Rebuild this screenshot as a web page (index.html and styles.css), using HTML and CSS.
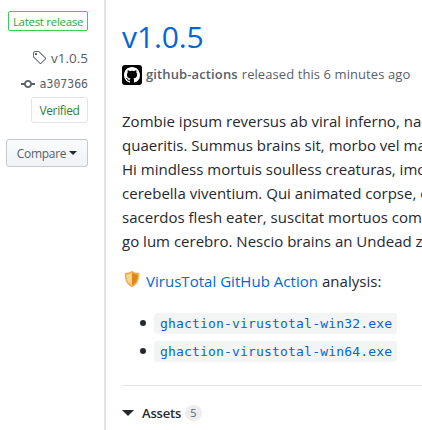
FILE: index.html
```html
<!DOCTYPE html>
<html lang="en">
<head>
<meta charset="utf-8">
<title>v1.0.5</title>
<link rel="stylesheet" href="styles.css">
</head>
<body>
<div class="release">
  <aside class="meta">
    <span class="latest">Latest release</span>
    <a class="tag"><svg width="14" height="16" viewBox="0 0 14 16"><path fill="currentColor" fill-rule="evenodd" d="M7.73 1.73C7.26 1.26 6.62 1 5.96 1H3.5C2.13 1 1 2.13 1 3.5v2.47c0 .66.27 1.3.73 1.77l6.06 6.06c.39.39 1.02.39 1.41 0l4.59-4.59a.996.996 0 0 0 0-1.41L7.73 1.73zM2.38 7.09c-.31-.3-.47-.7-.47-1.13V3.5c0-.88.72-1.59 1.59-1.59h2.47c.42 0 .83.16 1.13.47l6.14 6.13-4.73 4.73-6.13-6.15zM3.01 3h2v2H3V3h.01z"/></svg><span>v1.0.5</span></a>
    <a class="commit"><svg width="14" height="16" viewBox="0 0 14 16"><path fill="currentColor" fill-rule="evenodd" d="M10.86 7c-.45-1.72-2-3-3.86-3-1.86 0-3.41 1.28-3.86 3H0v2h3.14c.45 1.72 2 3 3.86 3 1.86 0 3.41-1.28 3.86-3H14V7h-3.14zM7 10.2c-1.22 0-2.2-.98-2.2-2.2 0-1.22.98-2.2 2.2-2.2 1.22 0 2.2.98 2.2 2.2 0 1.22-.98 2.2-2.2 2.2z"/></svg><code>a307366</code></a>
    <span class="verified">Verified</span>
    <button class="compare"><span>Compare</span><i class="caret"></i></button>
  </aside>
  <main class="content">
    <h1>v1.0.5</h1>
    <p class="byline"><svg class="avatar" width="20" height="20" viewBox="0 0 20 20"><rect width="20" height="20" rx="3" fill="#000"/><g transform="translate(2 2)"><path fill="#fff" fill-rule="evenodd" d="M8 0C3.58 0 0 3.58 0 8c0 3.54 2.29 6.53 5.47 7.59.4.07.55-.17.55-.38 0-.19-.01-.82-.01-1.49-2.01.37-2.53-.49-2.69-.94-.09-.23-.48-.94-.82-1.13-.28-.15-.68-.52-.01-.53.63-.01 1.08.58 1.23.82.72 1.21 1.87.87 2.33.66.07-.52.28-.87.51-1.07-1.78-.2-3.64-.89-3.64-3.95 0-.87.31-1.59.82-2.15-.08-.2-.36-1.02.08-2.12 0 0 .67-.21 2.2.82.64-.18 1.32-.27 2-.27.68 0 1.36.09 2 .27 1.53-1.04 2.2-.82 2.2-.82.44 1.1.16 1.92.08 2.12.51.56.82 1.27.82 2.15 0 3.07-1.87 3.75-3.65 3.95.29.25.54.73.54 1.48 0 1.07-.01 1.93-.01 2.2 0 .21.15.46.55.38A8.013 8.013 0 0 0 16 8c0-4.42-3.58-8-8-8z"/></g></svg><strong>github-actions</strong><span class="when">released this 6 minutes ago</span></p>
    <div class="notes">
      <span>Zombie ipsum reversus ab viral inferno, na</span>
      <span>quaeritis. Summus brains sit, morbo vel ma</span>
      <span>Hi mindless mortuis soulless creaturas, imo</span>
      <span>cerebella viventium. Qui animated corpse, c</span>
      <span>sacerdos flesh eater, suscitat mortuos com</span>
      <span>go lum cerebro. Nescio brains an Undead z</span>
    </div>
    <p class="analysis"><svg class="shield" width="18" height="18" viewBox="0 0 18 20"><path fill="#f0ad4e" d="M9 .8C7 2.600 4 3.200 1 3.200.8 10 2.200 15.600 9 19c6.800-3.400 8.200-9 8-15.800-3 0-6-.6-8-2.400z"/><path fill="#ffd38b" d="M9 3C7.200 4.200 5 4.900 2.700 5c.1 5.500 1.500 9.500 6.300 12z"/><path fill="#df851c" d="M9 3c1.800 1.200 4 1.900 6.300 2-.1 5.500-1.500 9.500-6.300 12z"/></svg><a>VirusTotal GitHub Action</a><span class="label">analysis:</span></p>
    <ul>
      <li><code>ghaction-virustotal-win32.exe</code></li>
      <li><code>ghaction-virustotal-win64.exe</code></li>
    </ul>
    <div class="assets"><i class="caret"></i><span class="name">Assets</span><span class="count">5</span></div>
  </main>
</div>
</body>
</html>
```
FILE: styles.css
```css
* { box-sizing: border-box; }
body { margin: 0; overflow: hidden; background: #fff; color: #24292e; font-family: "Open Sans", "Noto Sans", sans-serif; }
.release { display: flex; width: 422px; height: 430px; overflow: hidden; white-space: nowrap; }
.meta { width: 104px; flex: none; padding: 11px 16px 0 0; display: flex; flex-direction: column; align-items: flex-end; color: #586069; }
.latest { height: 20px; width: 80px; border: 1px solid #34d058; border-radius: 2px; color: #28a745; font-size: 11.5px; line-height: 19px; text-align: center; letter-spacing: -.3px; }
.tag { display: flex; align-items: center; gap: 5px; height: 20px; margin-top: 17px; font-size: 13.5px; }
.commit { display: flex; align-items: center; gap: 5px; height: 20px; margin-top: 6px; }
.commit code { font: 11.5px/20px "DejaVu Sans Mono", monospace; }
.verified { width: 57px; height: 26px; margin-top: 3px; border: 1px solid #e1e4e8; border-radius: 3px; color: #22863a; font-size: 12px; line-height: 26px; text-align: center; letter-spacing: -.35px; }
.compare { display: flex; align-items: center; justify-content: center; gap: 3px; width: 82px; height: 28px; margin-top: 16px; padding: 0; border: 1px solid #c5c9cd; border-radius: 3px; background: linear-gradient(#fafbfc, #eff3f6); color: #586069; font: 12px "Open Sans", sans-serif; letter-spacing: -.3px; }
.caret { width: 0; height: 0; border: 4px solid transparent; border-top-color: #24292e; border-bottom: 0; }
.content { flex: 1; min-width: 0; border-left: 2px solid #e1e4e8; padding: 16px 0 0 16px; }
h1 { margin: 0; height: 42px; color: #0366d6; font-size: 30px; font-weight: 400; line-height: 42px; letter-spacing: -.1px; }
.byline { display: flex; align-items: center; height: 20px; margin: 7px 0 0; color: #586069; font-size: 13px; line-height: 18px; }
.byline strong { margin: 0 0 2px 4px; font-weight: 600; letter-spacing: .12px; }
.when { margin: 0 0 2px 4px; letter-spacing: .08px; }
.notes { margin-top: 24px; font-size: 15px; line-height: 24px; letter-spacing: .01px; }
.notes span { display: block; width: max-content; }
.analysis { display: flex; align-items: center; height: 24px; margin: 16px 0; font-size: 15px; letter-spacing: .03px; }
.shield { margin: 0 0 4px 1px; }
.analysis a { margin-left: 5px; color: #0366d6; }
.label { margin-left: 4px; }
ul { margin: 18px 0 0; padding: 0 0 0 18px; list-style: none; }
li { display: flex; align-items: center; gap: 8px; height: 24px; line-height: 24px; }
li::before { content: ""; width: 6px; height: 6px; border-radius: 50%; background: #24292e; }
li + li { margin-top: 4px; }
li code { height: 21px; width: 243px; padding: 0 6px; border-radius: 3px; background: #f3f4f4; color: #0366d6; font: 13px/22px "DejaVu Sans Mono", monospace; letter-spacing: .18px; }
.assets { display: flex; align-items: center; margin-top: 22px; padding-top: 17px; border-top: 1px solid #e1e4e8; font-size: 13px; line-height: 20px; }
.assets .caret { border-width: 6px 6px 0; }
.name { margin-left: 8px; font-weight: 600; letter-spacing: -.2px; }
.count { width: 17px; height: 16px; margin-left: 4px; border-radius: 9px; background: #ededee; color: #586069; font-size: 11px; line-height: 16px; text-align: center; }
```
